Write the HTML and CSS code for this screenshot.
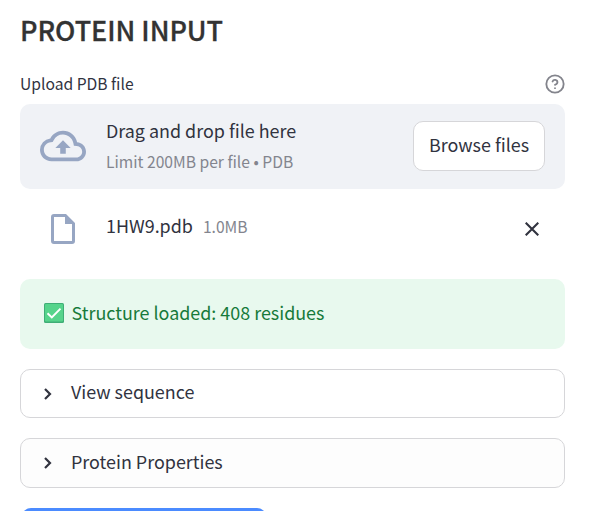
FILE: index.html
```html
<!DOCTYPE html>
<html lang="en">
<head>
<meta charset="utf-8">
<title>Protein input</title>
<link rel="stylesheet" href="styles.css">
</head>
<body>
<main class="panel">
  <h2 class="heading">PROTEIN INPUT</h2>
  <div class="label-row">
    <label class="label">Upload PDB file</label>
    <svg class="help" viewBox="0 0 24 24" fill="none" stroke="currentColor" stroke-width="2.2" stroke-linecap="round" stroke-linejoin="round"><circle cx="12" cy="12" r="10.4"/><path d="M9.09 9a3 3 0 0 1 5.83 1c0 2-3 3-3 3"/><path d="M12 17h.01"/></svg>
  </div>
  <section class="dropzone">
    <svg class="cloud" viewBox="0 0 24 24" fill="currentColor"><path d="M19.35 10.04A7.49 7.49 0 0 0 12 4C9.11 4 6.6 5.64 5.35 8.04A5.994 5.994 0 0 0 0 14c0 3.31 2.69 6 6 6h13c2.76 0 5-2.24 5-5 0-2.64-2.05-4.78-4.65-4.96zM19 18H6c-2.21 0-4-1.79-4-4 0-2.05 1.53-3.76 3.56-3.97l1.07-.11.5-.95A5.469 5.469 0 0 1 12 6c2.62 0 4.88 1.86 5.39 4.43l.3 1.5 1.53.11A2.98 2.98 0 0 1 22 15c0 1.65-1.35 3-3 3zM8 13h2.55v3h2.9v-3H16l-4-4z"/></svg>
    <div class="instructions">
      <span class="title">Drag and drop file here</span>
      <span class="limit">Limit 200MB per file • PDB</span>
    </div>
    <button class="browse" type="button">Browse files</button>
  </section>
  <div class="file">
    <svg class="file-icon" viewBox="0 0 24 30"><path d="M3 0H15L24 9V27a3 3 0 0 1-3 3H3a3 3 0 0 1-3-3V3a3 3 0 0 1 3-3zM3 3V27H21V10H14V3z" fill="currentColor" fill-rule="evenodd"/></svg>
    <span class="file-name">1HW9.pdb</span>
    <span class="file-size">1.0MB</span>
    <svg class="close" viewBox="0 0 14 14"><path d="M.7.7l12.6 12.6M13.3.7L.7 13.3" stroke="currentColor" stroke-width="2.1" fill="none"/></svg>
  </div>
  <div class="success">
    <svg class="check" viewBox="0 0 20 20"><rect width="20" height="20" rx="1.5" fill="#3fae76"/><rect x="1" y="1" width="18" height="17.5" rx="1" fill="#56d48b"/><path d="M3.5 10.2L7.8 14.4L16.5 5.6" fill="none" stroke="#fff" stroke-width="2"/></svg>
    <span class="success-text">Structure loaded: 408 residues</span>
  </div>
  <div class="expander">
    <svg class="chevron" viewBox="0 0 8 12"><path d="M1 1l5 5-5 5" fill="none" stroke="currentColor" stroke-width="2.2"/></svg>
    <span class="sequence">View sequence</span>
  </div>
  <div class="expander expander-last">
    <svg class="chevron" viewBox="0 0 8 12"><path d="M1 1l5 5-5 5" fill="none" stroke="currentColor" stroke-width="2.2"/></svg>
    <span class="properties">Protein Properties</span>
  </div>
  <div class="primary"></div>
</main>
</body>
</html>
```
FILE: styles.css
```css
* { box-sizing: border-box; }
html, body { margin: 0; height: 100%; overflow: hidden; background: #fff; }
body { font-family: "Noto Sans CJK JP", "Noto Sans", sans-serif; font-size: 17.92px; line-height: 30px; color: #31333f; }
svg { display: block; flex: none; }
span, label, button { white-space: nowrap; }
.panel { width: 545px; margin-left: 20px; height: 511px; overflow: hidden; }
.heading { margin: 0; padding-top: 10px; height: 71px; font-size: 27px; line-height: 40px; font-weight: 500; color: #333; white-space: nowrap; letter-spacing: -0.05px; -webkit-text-stroke: 0.3px #333; }
.label-row { display: flex; align-items: center; justify-content: space-between; height: 26px; margin-bottom: 7px; }
.label { font-size: 15.65px; line-height: 25px; padding-bottom: 1px; }
.help { width: 20px; height: 20px; color: #83848c; }
.dropzone { display: flex; align-items: center; height: 85px; padding: 0 20px 2px; border-radius: 10px; background: #f0f2f6; }
.cloud { width: 46px; height: 46px; color: #97a6c3; }
.instructions { display: flex; flex-direction: column; margin-left: 20px; flex: 1; }
.title { line-height: 30px; }
.limit { font-size: 15.65px; line-height: 31px; padding-top: 1px; color: #83858e; }
.browse { width: 132px; height: 50px; padding: 0 0 4px; border: 1px solid #d6d6d9; border-radius: 10px; background: #fff; font: inherit; color: inherit; }
.file { display: flex; align-items: center; height: 50px; margin: 15px 26px 25px 31px; }
.file-icon { width: 24px; height: 30px; color: #97a6c3; }
.file-name { margin-left: 31px; padding-bottom: 8px; }
.file-size { margin-left: 10px; padding-bottom: 5px; font-size: 15.65px; color: #83858e; }
.close { width: 14px; height: 14px; margin: 0 0 1px auto; }
.success { display: flex; align-items: center; height: 70px; padding: 0 0 2px 24px; margin-bottom: 20px; border-radius: 10px; background: #e8f9ee; color: #177a3a; }
.check { width: 20px; height: 20px; }
.success-text { margin-left: 7.5px; padding-bottom: 2px; }
.expander { display: flex; align-items: center; height: 49px; padding-left: 23px; border: 1px solid #d6d6d9; border-radius: 10px; margin-bottom: 20px; }
.expander span { padding-bottom: 5px; }
.expander-last { height: 50px; background: #fdfdfd; }
.expander-last span { padding-bottom: 4px; }
.chevron { width: 8px; height: 12px; margin-right: 19px; }
.primary { width: 246px; height: 50px; margin-left: 1px; border-radius: 10px; background: #4b8bff; }
```
